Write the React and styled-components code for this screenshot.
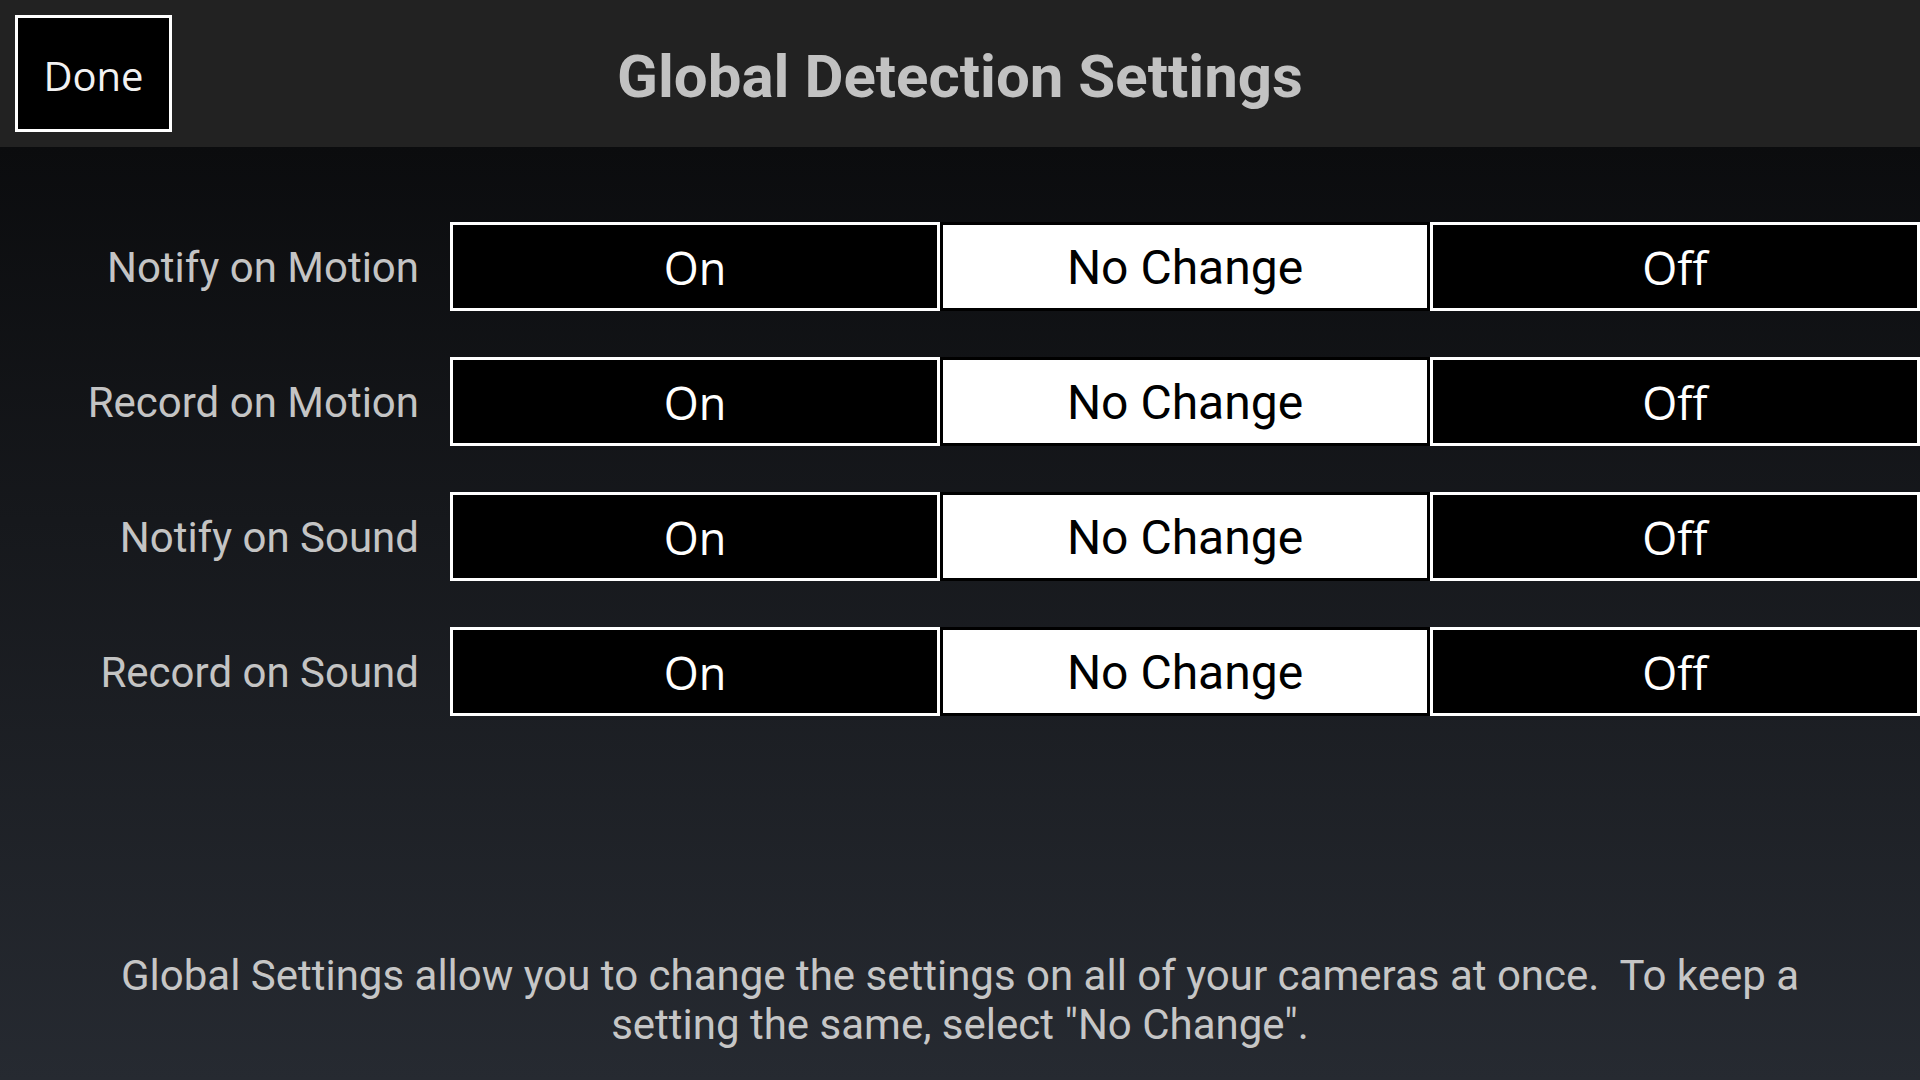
import React, { useState } from "react";
import styled, { createGlobalStyle } from "styled-components";

const GlobalStyle = createGlobalStyle`
  html, body {
    margin: 0;
    padding: 0;
    background: #222222;
  }
  * {
    box-sizing: border-box;
  }
`;

const SETTINGS = [
  "Notify on Motion",
  "Record on Motion",
  "Notify on Sound",
  "Record on Sound",
];

const OPTIONS = ["On", "No Change", "Off"];

const App = () => {
  const [values, setValues] = useState(SETTINGS.map(() => "No Change"));

  const choose = (row, option) => {
    setValues((prev) => prev.map((v, i) => (i === row ? option : v)));
  };

  return (
    <Screen>
      <GlobalStyle />
      <Header>
        <DoneButton>Done</DoneButton>
        <Title>Global Detection Settings</Title>
      </Header>
      <Content>
        <Rows>
          {SETTINGS.map((label, row) => (
            <Row key={label}>
              <Label>{label}</Label>
              <Segments>
                {OPTIONS.map((option) => (
                  <Segment
                    key={option}
                    $active={values[row] === option}
                    onClick={() => choose(row, option)}
                  >
                    {option}
                  </Segment>
                ))}
              </Segments>
            </Row>
          ))}
        </Rows>
        <Footer>
          Global Settings allow you to change the settings on all of your cameras at once.&nbsp; To keep a
          <br />
          setting the same, select "No Change".
        </Footer>
      </Content>
    </Screen>
  );
};

export default App;

const Screen = styled.div`
  width: 1920px;
  height: 1080px;
  display: flex;
  flex-direction: column;
  overflow: hidden;
`;

const Header = styled.div`
  height: 147px;
  flex-shrink: 0;
  background-color: #222222;
  display: flex;
  align-items: center;
  justify-content: center;
  position: relative;
`;

const DoneButton = styled.button`
  position: absolute;
  left: 15px;
  top: 15px;
  width: 157px;
  height: 117px;
  background-color: #000;
  border: 3px solid #ffffff;
  color: #f2f2f2;
  font-family: "Open Sans", "Noto Sans", sans-serif;
  font-size: 40px;
  padding: 4px 0 0;
  cursor: pointer;
`;

const Title = styled.h1`
  margin: 0;
  font-family: Roboto, "Liberation Sans", sans-serif;
  font-weight: 700;
  font-size: 60px;
  color: #c2c2c2;
  line-height: 1;
  padding-top: 6px;
`;

const Content = styled.div`
  flex: 1;
  display: flex;
  flex-direction: column;
  padding: 75px 0 31px;
  background: linear-gradient(to bottom, #0b0c0e 0%, #16181c 40%, #262a31 100%);
`;

const Rows = styled.div`
  display: flex;
  flex-direction: column;
  gap: 46px;
`;

const Row = styled.div`
  display: flex;
  align-items: center;
  height: 89px;
`;

const Label = styled.div`
  width: 450px;
  padding: 2px 31px 0 0;
  text-align: right;
  font-family: Roboto, "Liberation Sans", sans-serif;
  font-size: 42px;
  color: #c4c4c4;
  white-space: nowrap;
`;

const Segments = styled.div`
  flex: 1;
  display: grid;
  grid-template-columns: repeat(3, 1fr);
  height: 100%;
`;

const Segment = styled.button`
  height: 100%;
  margin: 0;
  padding: 2px 0 0;
  border: 3px solid ${(p) => (p.$active ? "#000000" : "#ffffff")};
  background-color: ${(p) => (p.$active ? "#ffffff" : "#000000")};
  color: ${(p) => (p.$active ? "#000000" : "#ffffff")};
  font-family: ${(p) =>
    p.$active ? 'Roboto, "Liberation Sans", sans-serif' : '"Open Sans", "Noto Sans", sans-serif'};
  font-size: ${(p) => (p.$active ? "48px" : "45px")};
  cursor: pointer;
`;

const Footer = styled.p`
  margin: auto 0 0;
  text-align: center;
  font-family: Roboto, "Liberation Sans", sans-serif;
  font-size: 42px;
  line-height: 49px;
  color: #c6c6c6;
`;
